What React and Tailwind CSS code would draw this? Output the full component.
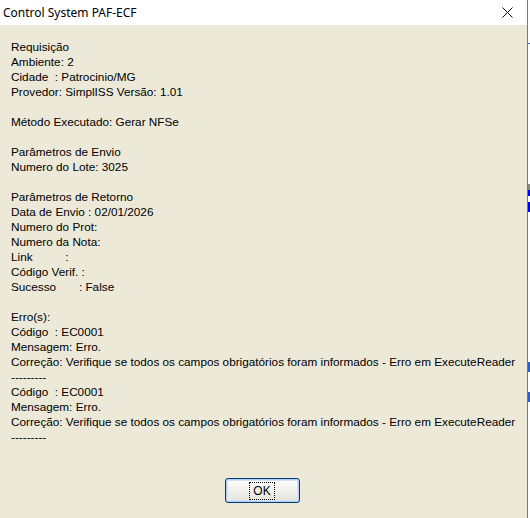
import React from 'react';

const lines = [
    'Requisição',
    'Ambiente: 2',
    'Cidade  : Patrocinio/MG',
    'Provedor: SimplISS Versão: 1.01',
    '',
    'Método Executado: Gerar NFSe',
    '',
    'Parâmetros de Envio',
    'Numero do Lote: 3025',
    '',
    'Parâmetros de Retorno',
    'Data de Envio : 02/01/2026',
    'Numero do Prot:',
    'Numero da Nota:',
    'Link          :',
    'Código Verif. :',
    'Sucesso       : False',
    '',
    'Erro(s):',
    'Código  : EC0001',
    'Mensagem: Erro.',
    'Correção: Verifique se todos os campos obrigatórios foram informados - Erro em ExecuteReader',
    '---------',
    'Código  : EC0001',
    'Mensagem: Erro.',
    'Correção: Verifique se todos os campos obrigatórios foram informados - Erro em ExecuteReader',
    '---------',
];

function ContentLine({ text }) {
    // keep the padded spaces like the original memo
    return <div className="h-[15px] leading-[15px] whitespace-pre">{text || '\u00a0'}</div>;
}

export default function App() {
    return (
        <div className="w-[530px] h-[518px] flex bg-white overflow-hidden" style={{ fontFamily: '"Liberation Sans", Arial, sans-serif' }}>
            <div className="w-[527px] h-full flex flex-col">
                <div className="h-[25px] bg-white flex items-center justify-between pl-[3px] pr-[14px]">
                    <span className="text-[12px] text-black" style={{ fontFamily: '"Noto Sans", "Liberation Sans", sans-serif' }}>Control System PAF-ECF</span>
                    <svg width="11" height="11" viewBox="0 0 11 11">
                        <path d="M0.5 0.5 L10.5 10.5 M10.5 0.5 L0.5 10.5" stroke="#111" strokeWidth="1" />
                    </svg>
                </div>
                <div className="flex-1 bg-[#ECE9D8] flex flex-col">
                    <div className="pl-[11px] pt-[14px] text-[11.75px] text-black">
                        {lines.map((l, i) => (
                            <ContentLine key={i} text={l} />
                        ))}
                    </div>
                    <div className="flex justify-center pt-[34px] pr-[3px]">
                        <button className="w-[75px] h-[25px] rounded-[3px] border border-[#003C74] bg-gradient-to-b from-white to-[#E3E2DA] shadow-[inset_0_0_0_1px_#B6CDF6,inset_0_0_0_2px_#D5E3FA] flex items-center justify-center">
                            <span className="border border-dotted border-black px-[3px] h-[18px] leading-[16px] text-[12px] text-black">OK</span>
                        </button>
                    </div>
                </div>
            </div>
            <div className="w-px h-full bg-[#7A7A7A]" />
            <div className="flex-1 h-full flex flex-col bg-white">
                <div className="h-[43px] bg-white" />
                <div className="h-px bg-[#3D6FB8]" />
                <div className="h-[140px] bg-white" />
                <div className="h-[6px] bg-[#888]" />
                <div className="h-[6px] bg-[#0000F0]" />
                <div className="h-[6px] bg-white" />
                <div className="h-[10px] bg-[#0000F0]" />
                <div className="h-[150px] bg-white" />
                <div className="h-[10px] bg-[#2C5FC8]" />
                <div className="h-[20px] bg-white" />
                <div className="h-[10px] bg-[#2C5FC8]" />
                <div className="flex-1 bg-white" />
            </div>
        </div>
    );
}
